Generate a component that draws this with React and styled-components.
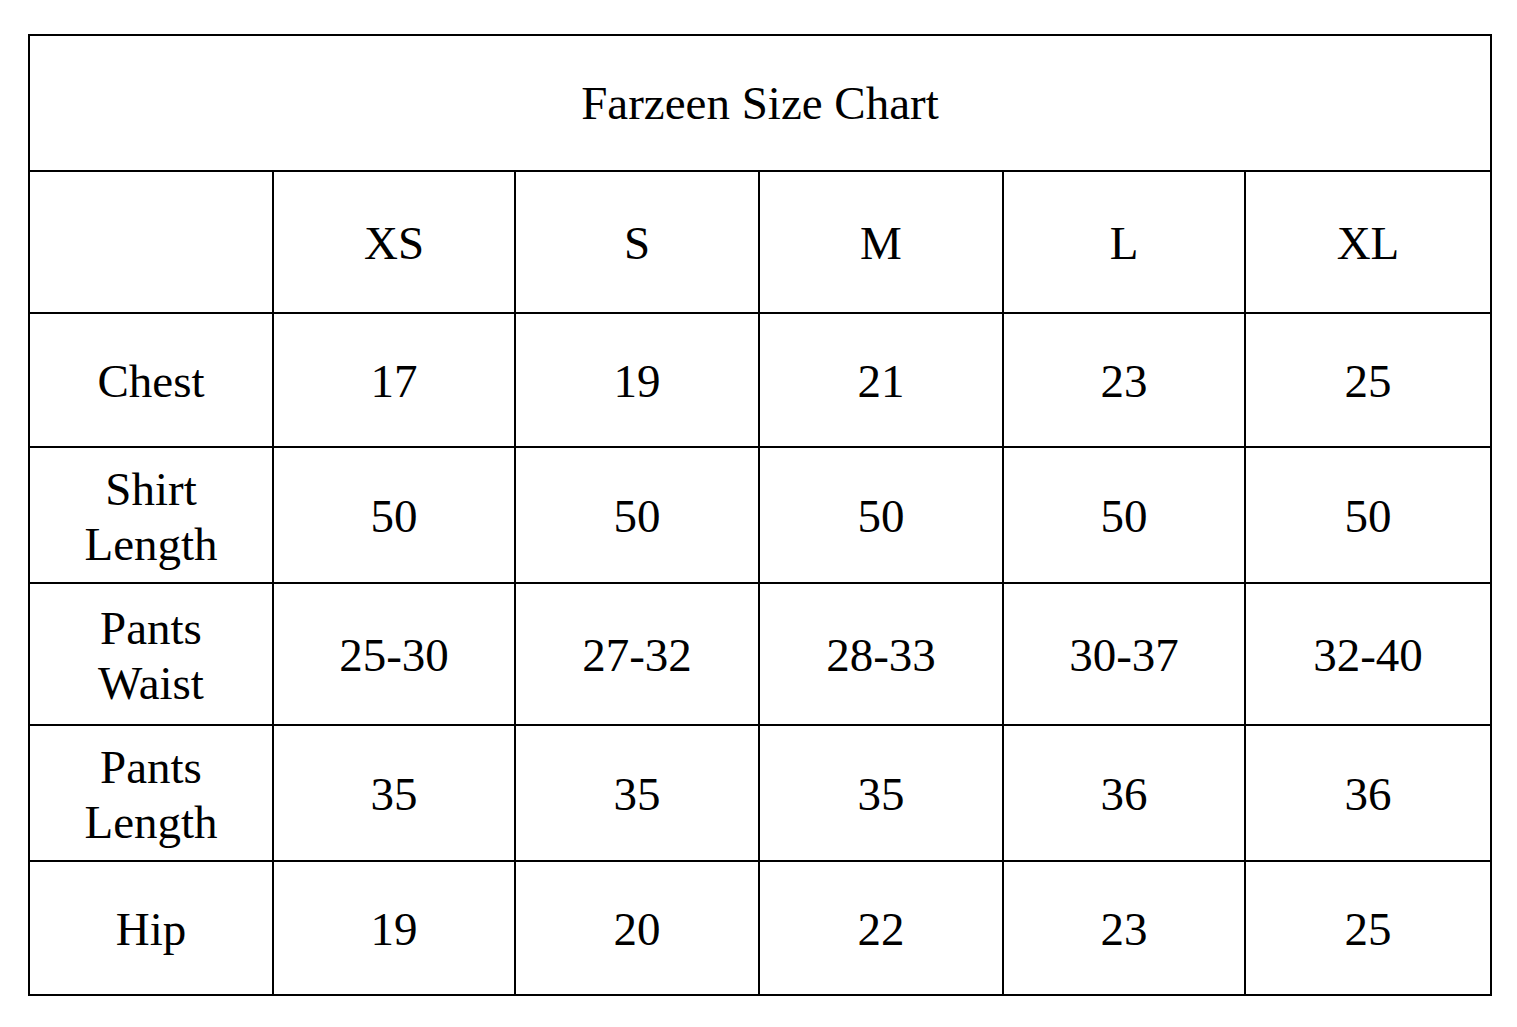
import React from "react";
import styled, { createGlobalStyle } from "styled-components";

const Global = createGlobalStyle`
  html, body { margin: 0; padding: 0; background: #fff; }
  body { font-family: "Liberation Serif", "Times New Roman", serif; color: #000; }
`;

const Page = styled.div`
  padding: 34px 0 0 28px;
`;

const Chart = styled.div`
  display: grid;
  grid-template-columns: 242px 240px 242px 242px 240px 244px;
  grid-template-rows: 134px 140px 132px 134px 140px 134px 132px;
  gap: 2px;
  padding: 2px;
  background: #000;
  width: max-content;
`;

const Cell = styled.div`
  background: #fff;
  display: flex;
  align-items: center;
  justify-content: center;
  text-align: center;
  font-size: 47px;
  line-height: 55px;
  grid-column: ${(p) => (p.$span ? `span ${p.$span}` : "auto")};
  padding-top: ${(p) => (p.$title ? "0" : "3px")};
`;

const sizes = ["XS", "S", "M", "L", "XL"];
const rows = [
  ["Chest", ["17", "19", "21", "23", "25"]],
  ["Shirt\nLength", ["50", "50", "50", "50", "50"]],
  ["Pants\nWaist", ["25-30", "27-32", "28-33", "30-37", "32-40"]],
  ["Pants\nLength", ["35", "35", "35", "36", "36"]],
  ["Hip", ["19", "20", "22", "23", "25"]],
];

const Label = ({ text }) => (
  <span>
    {text.split("\n").map((t, i) => (
      <React.Fragment key={i}>
        {i > 0 && <br />}
        {t}
      </React.Fragment>
    ))}
  </span>
);

export default function App() {
  return (
    <>
      <Global />
      <Page>
        <Chart>
          <Cell $span={6} $title>Farzeen Size Chart</Cell>
          <Cell />
          {sizes.map((s) => (
            <Cell key={s}>{s}</Cell>
          ))}
          {rows.map(([label, vals]) => (
            <React.Fragment key={label}>
              <Cell>
                <Label text={label} />
              </Cell>
              {vals.map((v, i) => (
                <Cell key={i}>{v}</Cell>
              ))}
            </React.Fragment>
          ))}
        </Chart>
      </Page>
    </>
  );
}
